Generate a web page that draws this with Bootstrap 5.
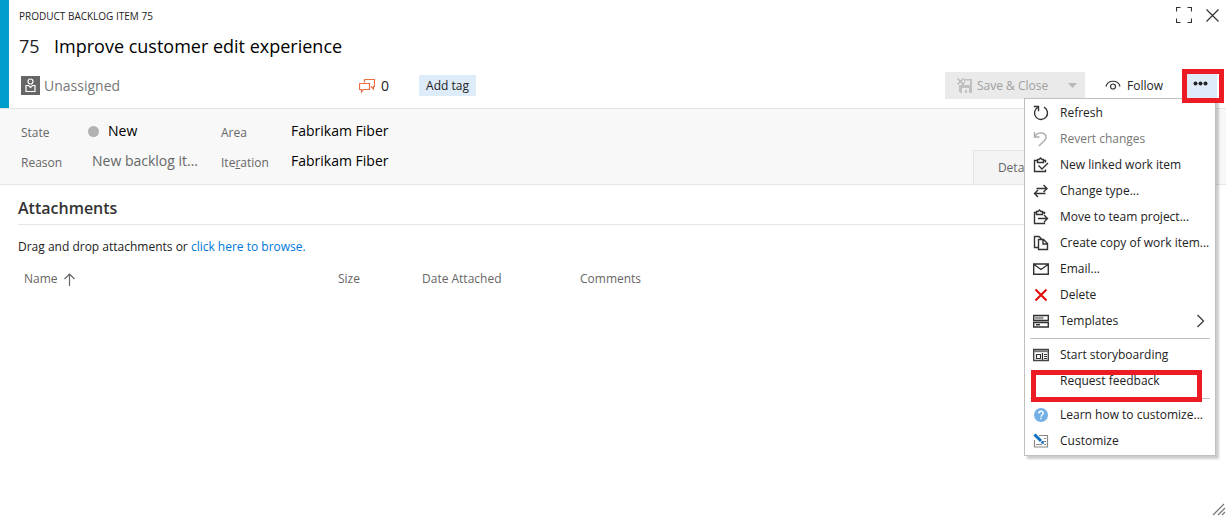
<!DOCTYPE html>
<html lang="en">
<head>
<meta charset="utf-8">
<meta name="viewport" content="width=device-width, initial-scale=1">
<title>Product Backlog Item 75</title>
<link href="https://cdn.jsdelivr.net/npm/bootstrap@5.3.0/dist/css/bootstrap.min.css" rel="stylesheet">
<style>
  body { font-family: "Open Sans", "Noto Sans", sans-serif; font-size: 12px; line-height: 20px; color: #222; background: #fff; min-height: 100vh; }
  svg { flex: none; display: block; fill: none; stroke: #333; stroke-width: 1.2; }
  button, .btn, input { font-size: inherit; line-height: inherit; }
  .form-head { border-left: 9px solid #009ccc; height: 108px; padding-left: 10px; }
  .kind { font-size: 10px; height: 32px; padding-top: 6px; }
  .item-title { font-size: 18px; height: 28px; line-height: 28px; color: #000; }
  .item-title input { border: 0; padding: 0; width: 400px; background: transparent; color: #000; }
  .item-number { width: 35px; color: #222; }
  .tool-row { height: 27px; margin-top: 12px; }
  .plain { border: 0; padding: 0; background: none; color: inherit; }
  .assignee { width: 340px; font-size: 14px; color: #777; gap: 4px; padding-left: 2px; }
  .discuss { width: 60px; gap: 6px; font-size: 14px; }
  .tag-btn { background: #deecf9; width: 57px; height: 21px; line-height: 20px; }
  .save-group { background: #eaeaea; color: #a0a0a0; height: 27px; width: 140px; }
  .save-group button:disabled { color: inherit; }
  .follow-btn { margin-left: 20px; width: 59px; gap: 6px; }
  .more-wrap { margin: 0 9px 0 20px; }
  .more-btn { width: 33px; height: 27px; background: #deecf9; }
  .marker { position: absolute; border: 5px solid #ed1c24; pointer-events: none; z-index: 1100; }
  .marker-more { left: -2px; top: -3px; width: 42px; height: 34px; }
  .marker-item { left: 6px; top: 2px; width: 171px; height: 32px; }
  .corner-tools { position: absolute; right: 7px; top: 7px; gap: 14px; }

  .fields { background: #f8f8f8; border-top: 1px solid #e6e6e6; border-bottom: 1px solid #e6e6e6; height: 77px; padding: 7px 0 0 21px; }
  .field-grid { display: grid; grid-template-columns: 67px 133px 70px 120px; grid-auto-rows: 30px; align-items: center; }
  .field-grid label { color: #666; padding-top: 4px; }
  .field-grid input { border: 0; padding: 0; background: transparent; width: 100%; font-size: 14px; color: #000; text-overflow: ellipsis; }
  .field-grid .reason { margin-left: 4px; width: 110px; color: #666; }
  .state-dot { width: 11px; height: 11px; border-radius: 50%; background: #b2b2b2; margin-right: 9px; flex: none; }
  .tab-btn { border: 1px solid #e4e4e4; border-bottom: 0; background: #f4f4f4; width: 88px; height: 34px; margin-right: 165px; color: #666; }

  .attach { padding: 11px 18px 0; }
  .attach h2 { font-size: 16px; line-height: 24px; font-weight: 600; margin: 0; padding-bottom: 4px; border-bottom: 1px solid #e6e6e6; color: #333; }
  .attach p { margin: 12px 0; }
  .attach a { color: #0078d7; text-decoration: none; }
  .attach table { width: 100%; table-layout: fixed; color: #666; }
  .attach th { font-weight: 400; padding: 0 0 0 6px; }
  .sort-label { gap: 6px; }

  .menu-list { min-width: 0; width: 192px; border: 1px solid #c0c0c0; border-radius: 0; padding: 1px 0; margin: 0; right: 1px; top: 26px; font-size: 12px; box-shadow: 3px 3px 2px rgba(0,0,0,.2); background: #fff; }
  .menu-list .dropdown-item { height: 26px; padding: 0 10px 0 8px; display: flex; align-items: center; gap: 11px; color: #222; line-height: 20px; }
  .menu-list .dropdown-item:disabled { color: #777; }
  .menu-list hr { margin: 4px 5px 3px; border-top: 1px solid #c0c0c0; opacity: 1; color: inherit; }
  .grip { position: fixed; right: 0; bottom: 1px; }
</style>
</head>
<body>
<header class="form-head position-relative">
  <div class="kind">PRODUCT BACKLOG ITEM 75</div>
  <div class="corner-tools d-flex align-items-center">
    <button class="plain" aria-label="Full screen"><svg width="16" height="16"><path d="M.5 4.500v-4h4M11.500 .5h4v4M15.500 11.500v4h-4M4.500 15.500h-4v-4"/></svg></button>
    <button class="plain" aria-label="Close"><svg width="13" height="13"><path d="M.5 .5l12 12M12.500 .5l-12 12"/></svg></button>
  </div>
  <div class="item-title d-flex"><span class="item-number">75</span><input aria-label="Title" value="Improve customer edit experience"></div>
  <div class="tool-row d-flex align-items-center">
    <button class="plain assignee d-flex align-items-center">
      <svg width="19" height="19"><path fill="#666" stroke="none" d="M0 0h19v19H0z"/><g stroke="#fff"><circle cx="9.500" cy="5.500" r="2.500"/><path d="M5 9.500v6h9v-6l-2.500 0-2 2-2-2z"/></g></svg>
      Unassigned</button>
    <button class="plain discuss d-flex align-items-center">
      <svg width="16" height="16" style="stroke:#ee6c41"><path d="M5.500 4.500v-3h10v7h-1v2.500l-2.500-2.500M.5 5.500h10v6h-6l-2 2.500v-2.500h-2z"/></svg>
      0</button>
    <button class="plain tag-btn">Add tag</button>
    <div class="save-group d-flex ms-auto">
      <button class="plain d-flex align-items-center flex-fill ps-2 ms-1" disabled>
        <svg width="16" height="16" class="me-1" style="stroke:#b8b8b8"><path fill="#c0c0c0" stroke="none" d="M7 1h8v14H3.500L2 13.500V7h2l3-3z"/><path fill="#eaeaea" stroke="none" d="M8 2.500h5V7H6l2-2zM5 10h7v5h-2v-3H8v3H5z"/><path stroke-width="1.400" d="M.5 .5l6 6M6.500 .5l-6 6"/></svg>
        Save &amp; Close</button>
      <button class="plain pe-2" aria-label="More save options" disabled><svg width="9" height="5"><path fill="#b8b8b8" stroke="none" d="M0 0h9L4.500 5z"/></svg></button>
    </div>
    <button class="plain follow-btn d-flex align-items-center">
      <svg width="16" height="14"><path d="M1 7.500C2.500 .5 13.500 .5 15 7.500"/><circle cx="8" cy="7.500" r="2.500"/></svg>
      Follow</button>
    <div class="more-wrap position-relative">
      <button class="plain more-btn d-flex align-items-center justify-content-center" aria-label="More actions" aria-expanded="true"><svg width="15" height="9"><g fill="#222" stroke="none"><circle cx="2.500" cy="2.500" r="2"/><circle cx="7.500" cy="2.500" r="2"/><circle cx="12.500" cy="2.500" r="2"/></g></svg></button>
      <div class="marker marker-more"></div>
      <div class="dropdown-menu menu-list show">
        <button class="dropdown-item"><svg width="16" height="16"><path stroke-width="1.400" d="M4.500 2.500A6.500 6.500 0 1 0 11 2.200M.8 1.500h4.700v4.700"/></svg>Refresh</button>
        <button class="dropdown-item" disabled><svg width="16" height="16" style="stroke:#aaa"><path stroke-width="1.400" d="M1.500 1v5h5M1.500 6C5 0 13 1 13 6.500c0 3-3 4-7 8.500"/></svg>Revert changes</button>
        <button class="dropdown-item"><svg width="16" height="16"><path stroke-width="1.400" d="M12.500 5.500v-2h-2M4 3.500H1.500v11h11v-2M4.500 5.500v-3h1.500l1.500-1.500 1.500 1.500h1.500v3zM5.500 8.500l3.500 3.500 6-6"/></svg>New linked work item</button>
        <button class="dropdown-item"><svg width="16" height="16"><path stroke-width="1.400" d="M3.500 5.500H14M10.500 2l3.500 3.500L10.500 9M12.500 10.500H1.500M5 7l-3.500 3.500L5 14"/></svg>Change type...</button>
        <button class="dropdown-item"><svg width="16" height="16"><path stroke-width="1.400" d="M11.500 5V3.500H9.500M3.500 3.500h-2v11h10v-1M3.500 5.500v-3H5l1.500-1.500L8 2.500h1.500v3zM5 9.500h9.500M11 6l3.500 3.500L11 13"/></svg>Move to team project...</button>
        <button class="dropdown-item"><svg width="16" height="16"><path stroke-width="1.400" d="M5 12.500H1.500v-11H6l3 3M5.500 4.500h5l4 4v6h-9zM10 4.500v4.500h4.500"/></svg>Create copy of work item...</button>
        <button class="dropdown-item"><svg width="16" height="16"><path stroke-width="1.400" d="M.7 3h14.600v10.300H.7zM1 3.500l7 5 7-5"/></svg>Email...</button>
        <button class="dropdown-item"><svg width="16" height="16" style="stroke:#e00b0b;stroke-width:2"><path d="M2.500 2.500l11 11M13.500 2.500l-11 11"/></svg>Delete</button>
        <button class="dropdown-item"><svg width="16" height="16"><path stroke-width="1.400" d="M.7 2.500h14.600v5H.7zM.7 9.500h14.600v4.500H.7z"/><path stroke-width="3" stroke="#999" d="M1.500 5h9"/><path stroke-width="1.500" d="M3 11.700h4"/></svg>Templates<svg class="ms-auto" width="9" height="14"><path d="M1.500 1l6 6-6 6"/></svg></button>
        <hr>
        <button class="dropdown-item"><svg width="16" height="16"><path stroke-width="1.400" stroke="#444" d="M.7 2.500h14.600v11H.7z"/><path stroke="#777" stroke-width="2" d="M1 4.200h14"/><path d="M3.500 7.500h4v4h-4zM9.500 6v7M11 7.500h3M11 9.500h3M11 11.500h3"/></svg>Start storyboarding</button>
        <button class="dropdown-item position-relative overflow-visible"><svg width="16" height="16"></svg>Request feedback<span class="marker marker-item"></span></button>
        <hr>
        <button class="dropdown-item"><svg width="16" height="16"><circle cx="8" cy="8" r="7" fill="#71afe5" stroke="none"/><path stroke="#fff" stroke-width="1.400" d="M5.800 6.500C5.800 3.500 10.300 3.500 10.300 6.200 10.300 7.800 8 7.800 8 9.700M8 10.800v1.400"/></svg>Learn how to customize...</button>
        <button class="dropdown-item"><svg width="16" height="16"><path stroke="#888" d="M6 2.500h8.500v11.500h-13V7M3 11.500h6M11 5.500h2M10 8.500h3M11 11.500h2"/><path stroke="#106ebe" stroke-width="3" d="M1.500 1.500L8 8"/><path stroke="#106ebe" stroke-width="1.500" d="M8 9.500l2 .5-.5-2"/></svg>Customize</button>
      </div>
    </div>
  </div>
</header>
<section class="fields d-flex justify-content-between">
  <div class="field-grid">
    <label for="state">State</label>
    <div class="d-flex align-items-center"><span class="state-dot"></span><input id="state" value="New"></div>
    <label for="area">Area</label><input id="area" value="Fabrikam Fiber">
    <label for="reason">Reason</label><input id="reason" class="reason" value="New backlog item">
    <label for="iteration">Ite<u>r</u>ation</label><input id="iteration" value="Fabrikam Fiber">
  </div>
  <button class="plain tab-btn align-self-end">Details</button>
</section>
<main class="attach">
  <h2>Attachments</h2>
  <p>Drag and drop attachments or <a href="#">click here to browse.</a></p>
  <table>
    <colgroup><col style="width:314px"><col style="width:84px"><col style="width:158px"><col></colgroup>
    <thead><tr>
      <th scope="col"><span class="sort-label d-flex align-items-center">Name<svg width="11" height="13"><path stroke="#666" d="M5.500 13V1M.5 6l5-5 5 5"/></svg></span></th>
      <th scope="col">Size</th><th scope="col">Date Attached</th><th scope="col">Comments</th>
    </tr></thead>
  </table>
</main>
<svg class="grip" width="14" height="13" aria-hidden="true"><path stroke="#777" d="M1 12L12 1M6 12l7-7M10 12l3-3"/></svg>
<script src="https://cdn.jsdelivr.net/npm/bootstrap@5.3.0/dist/js/bootstrap.bundle.min.js"></script>
</body>
</html>
